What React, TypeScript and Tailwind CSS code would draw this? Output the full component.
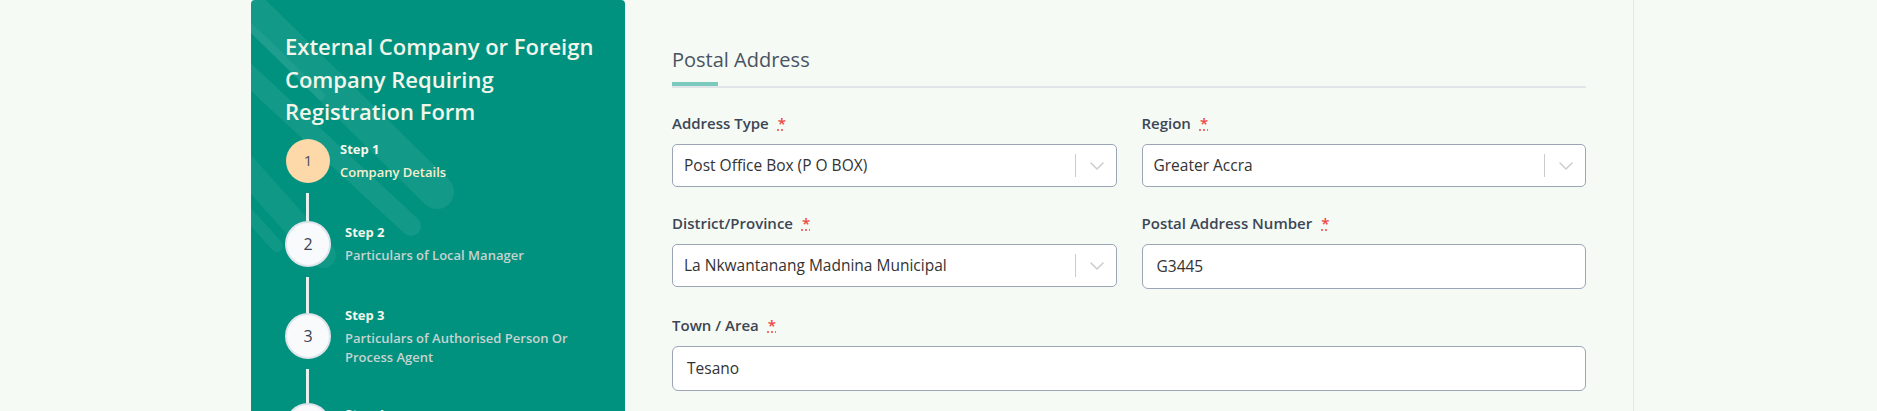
import React from 'react';
import { ChevronDown } from 'lucide-react';

type Step = { n: number; title: string; desc: string[]; active?: boolean };

const steps: Step[] = [
  { n: 1, title: 'Step 1', desc: ['Company Details'], active: true },
  { n: 2, title: 'Step 2', desc: ['Particulars of Local Manager'] },
  { n: 3, title: 'Step 3', desc: ['Particulars of Authorised Person Or', 'Process Agent'] },
  { n: 4, title: 'Step 4', desc: ['Particulars of Directors'] },
];

// length of the connector below each circle, down to the next one
const connectors = [28, 36, 34];

const Stripes: React.FC = () => (
  <svg className="absolute inset-0 pointer-events-none" width="374" height="411" viewBox="0 0 374 411">
    <g stroke="#ffffff" strokeLinecap="round" fill="none">
      <line x1="-40" y1="-30" x2="186" y2="192" strokeWidth="34" strokeOpacity="0.07" />
      <line x1="-40" y1="40" x2="160" y2="226" strokeWidth="20" strokeOpacity="0.07" />
      <line x1="-40" y1="130" x2="72" y2="255" strokeWidth="26" strokeOpacity="0.06" />
      <line x1="-20" y1="195" x2="26" y2="246" strokeWidth="12" strokeOpacity="0.06" />
      <line x1="0" y1="28" x2="70" y2="96" strokeWidth="8" strokeOpacity="0.05" />
    </g>
  </svg>
);

const StepRow: React.FC<{ step: Step }> = ({ step }) => {
  const circle = step.active
    ? 'w-[44px] h-[44px] ml-[1px] bg-[#fdd8a9] text-[#4a5260] text-[15px]'
    : 'w-[46px] h-[46px] bg-[#f8fafc] border-2 border-[#dfe5ea] text-[#3a4352] text-[16px]';
  return (
    <div className={`flex items-center ${step.active ? 'h-[44px]' : 'h-[46px]'}`}>
      <div className={`shrink-0 rounded-full flex items-center justify-center ${circle}`}>{step.n}</div>
      <div className={step.active ? 'ml-[10px] -mt-[2px]' : 'ml-[14px] -mt-[1px]'}>
        <p className="text-[13px] leading-[22px] font-bold text-[#f4f7ec]">{step.title}</p>
        <div className={`mt-[3px] text-[13px] leading-[19px] font-semibold ${step.active ? 'text-[#f6efcf]' : 'text-[#c6d3d0]'}`}>
          {step.desc.map(d => (
            <p key={d}>{d}</p>
          ))}
        </div>
      </div>
    </div>
  );
};

const Label: React.FC<{ text: string }> = ({ text }) => (
  <label className="block mb-[11px] text-[15px] leading-[20px] font-semibold text-[#3d4654]">
    {text}
    <abbr title="required" className="ml-[9px] text-[#ef4444]">*</abbr>
  </label>
);

const SelectBox: React.FC<{ label: string; value: string }> = ({ label, value }) => (
  <div>
    <Label text={label} />
    <div className="h-[43px] flex items-center bg-white border border-[#9ca5b6] rounded-[5px]">
      <span className="flex-1 pl-[11px] text-[15.5px] text-[#333333]">{value}</span>
      <span className="w-px h-[23px] bg-[#cccccc]" />
      <span className="pl-[9px] pr-[7px] flex items-center">
        <ChevronDown size={24} strokeWidth={1.5} className="text-[#cccccc]" />
      </span>
    </div>
  </div>
);

const TextBox: React.FC<{ label: string; value: string; className?: string }> = ({ label, value, className = '' }) => (
  <div className={className}>
    <Label text={label} />
    <div className="h-[45px] flex items-center bg-white border border-[#9ca5b6] rounded-[6px] pl-[14px] text-[15.5px] text-[#333333]">
      {value}
    </div>
  </div>
);

const App: React.FC = () => {
  return (
    <div className="h-[411px] overflow-hidden bg-[#f5faf4] font-['Open_Sans','Noto_Sans',sans-serif]">
      <div className="flex h-full pl-[251px]">
        {/* sidebar */}
        <aside className="relative w-[374px] h-full shrink-0 bg-[#00927f] rounded-t-[4px] overflow-hidden pt-[30px] pl-[34px]">
          <Stripes />
          <div className="relative">
            <h2 className="w-[318px] text-[22px] leading-[32.5px] font-semibold text-[#f2f6ea]">
              External Company or Foreign Company Requiring Registration Form
            </h2>
            <div className="mt-[11px]">
              {steps.map((step, i) => (
                <div key={step.n}>
                  <StepRow step={step} />
                  {i < connectors.length && (
                    <div className="ml-[21px] mt-[10px] w-[3px] bg-[#e9efed]" style={{ height: connectors[i] }} />
                  )}
                </div>
              ))}
            </div>
          </div>
        </aside>

        {/* form */}
        <main className="w-[1009px] h-full shrink-0 border-r border-[#e3e8e6] pt-[46px] px-[47px]">
          <h3 className="text-[20px] leading-[28px] text-[#4a5361] pb-[8px]">Postal Address</h3>
          <div className="w-[46px] h-[4px] bg-[#7ccabe]" />
          <div className="h-[2px] bg-[#e1e5ea]" />

          <div className="mt-[25px] grid grid-cols-2 gap-x-[25px] gap-y-[26px]">
            <SelectBox label="Address Type" value="Post Office Box (P O BOX)" />
            <SelectBox label="Region" value="Greater Accra" />
            <SelectBox label="District/Province" value="La Nkwantanang Madnina Municipal" />
            <TextBox label="Postal Address Number" value="G3445" />
            <TextBox label="Town / Area" value="Tesano" className="col-span-2" />
          </div>
        </main>
      </div>
    </div>
  );
};

export default App;
